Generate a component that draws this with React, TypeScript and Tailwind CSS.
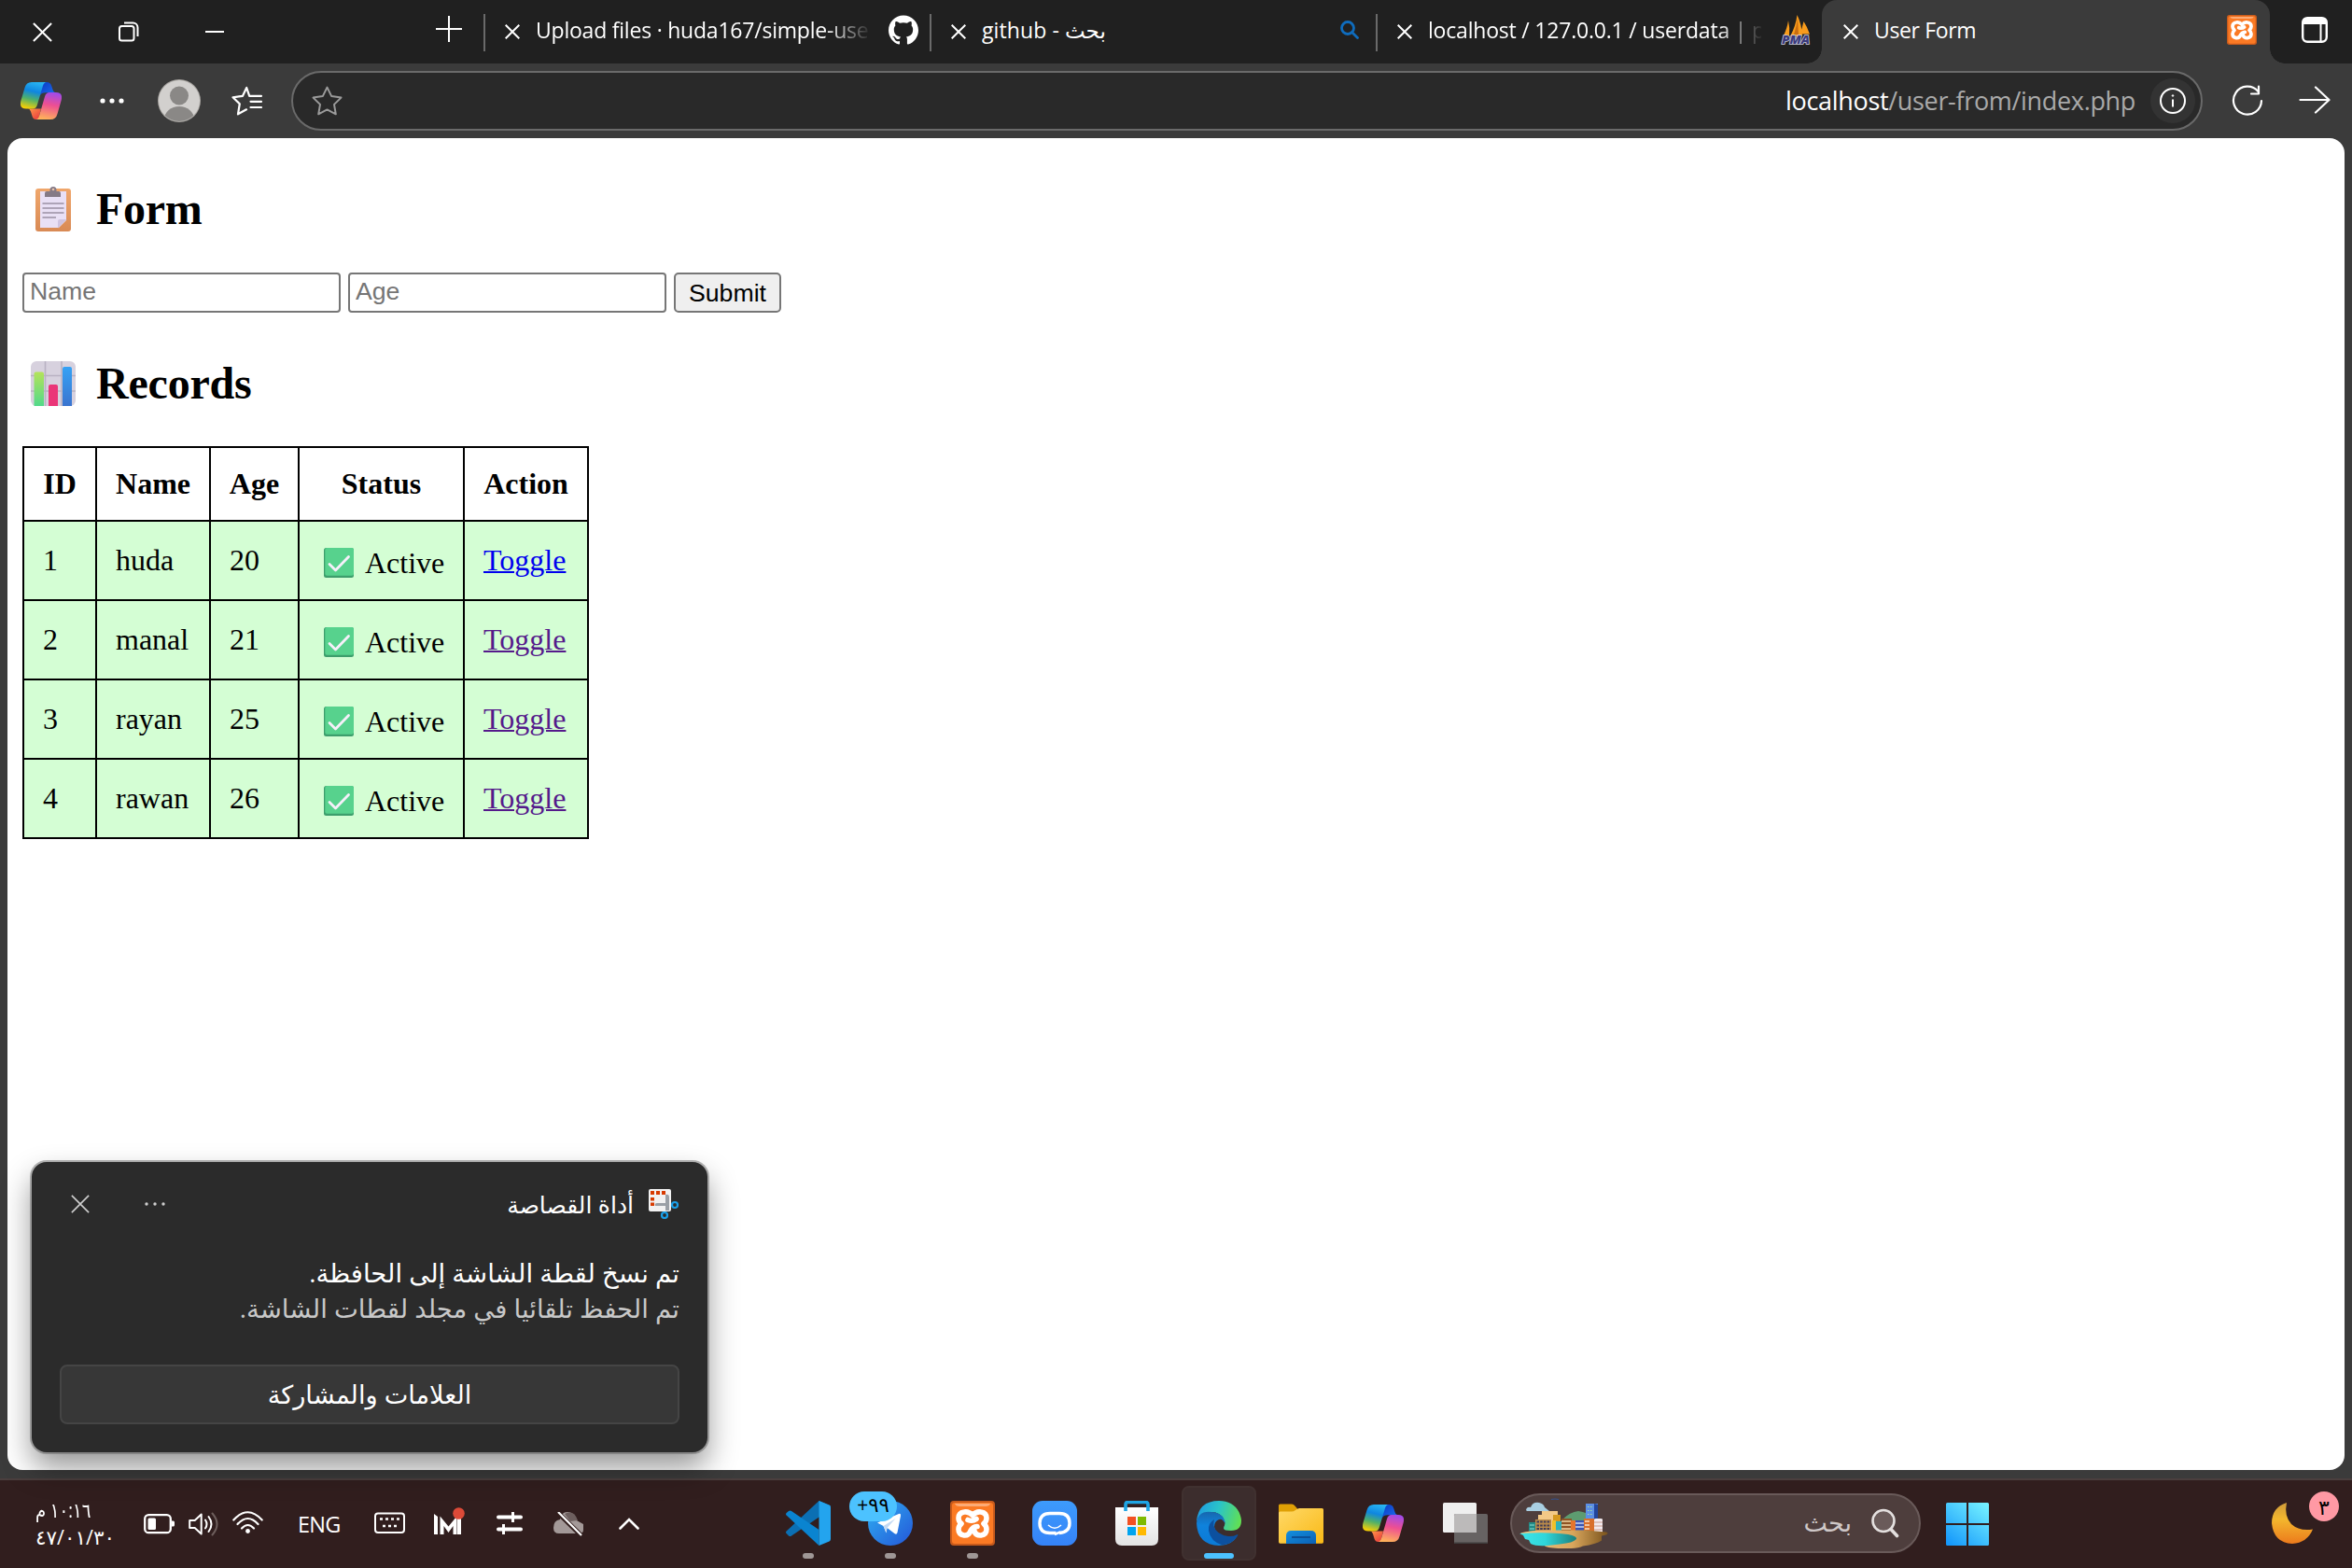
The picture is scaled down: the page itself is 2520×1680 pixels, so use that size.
import React from "react";
import { SiGithub } from "react-icons/si";

const UI = "font-['Open_Sans','DejaVu_Sans',sans-serif]";

function Cross({ size = 16, stroke = "#fff", w = 2 }: { size?: number; stroke?: string; w?: number }) {
  return (
    <svg width={size} height={size} viewBox="0 0 16 16" className="shrink-0" stroke={stroke} strokeWidth={(w * 16) / size}>
      <path d="M.7.7l14.6 14.6M15.3.7L.7 15.3" />
    </svg>
  );
}

function Xampp({ size }: { size: number }) {
  return (
    <svg width={size} height={size} viewBox="0 0 48 48" className="shrink-0" fill="none">
      <rect width="48" height="48" rx="4" fill="#c75a1c" />
      <rect x="2" y="2" width="44" height="44" rx="3" fill="#fb7a24" />
      <path d="M5 3h38q-1 3-5 3H10q-4 0-5-3z" fill="#fcab76" />
      <path
        d="M24 15.5Q20 11 15 12Q9 13 9 18.500Q9 22 12 24.500Q9 27 9 30.500Q9 36 15 37Q20 37.500 22 32M24 15.500Q28 11 33 12Q39 13 39 18.500Q39 22 36 24.500Q39 27 39 30.500Q39 36 33 37Q28 37.500 26 33L25.500 28.500M22 32Q24 28 29 27.500M19 20.500Q24 22.500 28 19.500"
        stroke="#fff"
        strokeWidth="5.600"
        strokeLinecap="round"
        strokeLinejoin="round"
      />
    </svg>
  );
}

function Copilot({ w, h, id }: { w: number; h: number; id: string }) {
  return (
    <svg width={w} height={h} viewBox="0 0 44 40" className="shrink-0">
      <defs>
        <linearGradient id={id + "a"} x1=".6" y1="0" x2=".35" y2="1">
          <stop offset="0" stopColor="#27b3f2" />
          <stop offset=".35" stopColor="#0f86e0" />
          <stop offset=".65" stopColor="#4fb06a" />
          <stop offset="1" stopColor="#f6cf05" />
        </linearGradient>
        <linearGradient id={id + "b"} x1=".6" y1="0" x2=".4" y2="1">
          <stop offset="0" stopColor="#a14be8" />
          <stop offset=".45" stopColor="#ee4f92" />
          <stop offset="1" stopColor="#ffb25a" />
        </linearGradient>
        <linearGradient id={id + "c"} x1="0" y1="0" x2="1" y2="1">
          <stop offset="0" stopColor="#0a3bc4" />
          <stop offset="1" stopColor="#1d6ff0" />
        </linearGradient>
        <linearGradient id={id + "d"} x1="0" y1="0" x2="1" y2="1">
          <stop offset="0" stopColor="#ff9a4a" />
          <stop offset="1" stopColor="#e8323c" />
        </linearGradient>
      </defs>
      <path d="M22 0h6q4 0 5.200 4l1.300 4q1 3.200 4 3.200H27q-5 0-6 3z" fill={`url(#${id}c)`} />
      <path d="M10 28.500h12l-3 11.500h-2q-3.500 0-4.500-3.500l-1.500-5q-1-3-3-3z" fill={`url(#${id}d)`} />
      <path d="M12 0h16q-3 0-4.200 4.500L18 24q-1.200 4.600-5 4.600H6q-8 0-5.500-9L4.500 6Q6 0 12 0z" fill={`url(#${id}a)`} />
      <path d="M32 40H16q3 0 4.200-4.500L26 15.600q1.200-4.600 5-4.600h7q8 0 5.500 9l-4 14Q38 40 32 40z" fill={`url(#${id}b)`} />
    </svg>
  );
}

function Pma() {
  return (
    <svg width="32" height="32" viewBox="0 0 32 32" className="shrink-0">
      <path d="M2.500 23Q7 14 8 6q2 8 1 17zM10 23Q16 12 17.500 0q5 10 5.500 23zM21 20.500q2-8 3.500-13.500 4 6 6.500 13.500z" fill="#f89c1c" />
      <path d="M14 21q3-9 4-17l1 17z" fill="#c96d10" />
      <text x="1" y="31" fontSize="11.500" fontWeight="800" fontStyle="italic" textLength="30" lengthAdjust="spacingAndGlyphs" fill="#3a3a7c" stroke="#c9c9da" strokeWidth="1.400" paintOrder="stroke" className={UI}>
        PMA
      </text>
    </svg>
  );
}

function Tab({ title, icon, fade = false, spacing, active = false }: { title: string; icon: React.ReactNode; fade?: boolean; spacing: string; active?: boolean }) {
  return (
    <div className={`flex h-[68px] shrink-0 items-center ${active ? "relative w-[480px] rounded-t-2xl bg-[#3b3b3b] pl-[23px]" : "w-[476px] pl-[21px]"}`}>
      {active && (
        <>
          <i className="absolute bottom-0 -left-4 size-4 bg-[radial-gradient(circle_at_0_0,#202020_15.500px,#3b3b3b_16px)]" />
          <i className="absolute -right-4 bottom-0 size-4 bg-[radial-gradient(circle_at_100%_0,#202020_15.500px,#3b3b3b_16px)]" />
        </>
      )}
      <Cross />
      <div
        className={`ml-[17px] w-[357px] shrink-0 overflow-hidden pb-[5px] text-[23px] leading-[34px] whitespace-nowrap text-white ${spacing} ${fade ? "[mask-image:linear-gradient(to_right,#000_310px,transparent_360px)]" : ""}`}
      >
        {title}
      </div>
      <div className={`flex w-8 shrink-0 justify-center pb-[4px] ${active ? "ml-[21px]" : "ml-[21px]"}`}>{icon}</div>
    </div>
  );
}

function Sep() {
  return <div className="mt-[15px] h-10 w-[2px] shrink-0 bg-[#6a6a6a]" />;
}

function TabBar() {
  return (
    <div className="flex h-[68px] bg-[#202020]">
      <div className="flex h-[68px] w-[518px] shrink-0 items-center pl-[35px]">
        <Cross size={21} />
        <svg width="22" height="22" viewBox="0 0 22 22" className="ml-[71px]" fill="none" stroke="#fff" strokeWidth="2">
          <rect x="1" y="5" width="15.500" height="15.500" rx="2.500" />
          <path d="M6 1.500h9.500a5 5 0 0 1 5 5V16" />
        </svg>
        <div className="ml-[71px] h-[2px] w-5 bg-white" />
        <svg width="28" height="28" viewBox="0 0 28 28" className="-mt-[6px] ml-[227px]" stroke="#fff" strokeWidth="2">
          <path d="M14 0v28M0 14h28" />
        </svg>
      </div>
      <Sep />
      <Tab title="Upload files · huda167/simple-use" fade spacing="tracking-[-0.22px]" icon={<SiGithub size={32} color="#fff" />} />
      <Sep />
      <Tab
        title="github - بحث"
        spacing="tracking-[0.1px]"
        icon={
          <svg width="20" height="20" viewBox="0 0 20 20" fill="none" stroke="#0f6cbd" strokeWidth="2.800">
            <circle cx="8" cy="8" r="6.500" />
            <path d="M12.500 12.500l6 6" strokeLinecap="round" />
          </svg>
        }
      />
      <Sep />
      <Tab title="localhost / 127.0.0.1 / userdata | p" fade spacing="tracking-[-0.2px]" icon={<Pma />} />
      <Tab title="User Form" active spacing="tracking-[-0.35px]" icon={<Xampp size={32} />} />
      <div className="flex w-[88px] items-start pt-[18px] pl-[34px]">
        <svg width="28" height="28" viewBox="0 0 28 28" fill="none">
          <rect x="1.200" y="1.200" width="25.600" height="25.600" rx="5" stroke="#fff" strokeWidth="2.400" />
          <path d="M1 8V5a4 4 0 0 1 4-4h18a4 4 0 0 1 4 4v3z" fill="#fff" />
          <path d="M20.500 8v19" stroke="#fff" strokeWidth="2" />
        </svg>
      </div>
    </div>
  );
}

const STAR = "M16.500 1.600l4.700 9.500 10.300 1.500-7.500 7.300 1.800 10.400-9.300-4.900-9.300 4.900 1.800-10.400L1.500 12.600l10.300-1.500z";

function Toolbar() {
  return (
    <div className="flex h-20 items-center bg-[#3b3b3b] pl-[22px]">
      <Copilot w={44} h={40} id="tb" />
      <svg width="26" height="6" viewBox="0 0 26 6" className="ml-[41px]" fill="#fff">
        <circle cx="3" cy="3" r="2.600" />
        <circle cx="13" cy="3" r="2.600" />
        <circle cx="23" cy="3" r="2.600" />
      </svg>
      <svg width="46" height="46" viewBox="0 0 46 46" className="ml-[36px]">
        <clipPath id="av">
          <circle cx="23" cy="23" r="22" />
        </clipPath>
        <circle cx="23" cy="23" r="23" fill="#a8a5a1" />
        <circle cx="23" cy="23" r="22" fill="#d2d0ce" />
        <g clipPath="url(#av)" fill="#8a8886">
          <circle cx="23" cy="17.500" r="10" />
          <ellipse cx="23" cy="43" rx="16" ry="14" />
        </g>
      </svg>
      <svg width="33" height="32" viewBox="0 0 33 32" className="ml-[33px]" fill="none" stroke="#fff" strokeWidth="2.200" strokeLinejoin="round" strokeLinecap="round">
        <path d="M19.500 10.800h-.3L16.200 2 12 10.800 1.500 12.300l7.300 7-1.800 11 9-5" />
        <path d="M20 10.800h12M20.500 16.800h11.500M20.500 23h11.500" />
      </svg>
      <div className="ml-[31px] flex h-16 w-[2048px] shrink-0 items-center rounded-full border-2 border-[#6a6a6a] bg-[#292929] pl-[20px]">
        <svg width="33" height="32" viewBox="0 0 33 32" fill="none" stroke="#9a9a9a" strokeWidth="2" strokeLinejoin="round">
          <path d={STAR} />
        </svg>
        <div className="ml-auto pb-[1px] text-[27px] leading-9 tracking-[-0.33px] whitespace-nowrap text-[#a9a9a9]">
          <span className="text-white">localhost</span>/user-from/index.php
        </div>
        <div className="mr-[6px] ml-[16px] flex size-12 items-center justify-center rounded-full bg-[#333]">
          <svg width="30" height="30" viewBox="0 0 30 30" fill="none" stroke="#fff" strokeWidth="2">
            <circle cx="15" cy="15" r="13" />
            <path d="M15 13.500v8" />
            <circle cx="15" cy="9.500" r=".8" fill="#fff" strokeWidth="1" />
          </svg>
        </div>
      </div>
      <svg width="34" height="34" viewBox="0 0 34 34" className="ml-[31px] shrink-0" fill="none" stroke="#fff" strokeWidth="2.200" strokeLinecap="round" strokeLinejoin="round">
        <path d="M28.500 7A15 15 0 1 0 32 17" />
        <path d="M29 1.500V9.500H21" />
      </svg>
      <svg width="34" height="30" viewBox="0 0 34 30" className="-mt-[2px] ml-[38px] shrink-0" fill="none" stroke="#fff" strokeWidth="2.200" strokeLinecap="round" strokeLinejoin="round">
        <path d="M1.500 15h31M18 1.500L32.500 15 18 28.500" />
      </svg>
    </div>
  );
}

function Clipboard() {
  return (
    <svg width="48" height="48" viewBox="0 0 48 48">
      <defs>
        <linearGradient id="cb" x1="0" y1="0" x2="0" y2="1">
          <stop offset="0" stopColor="#f0a76c" />
          <stop offset="1" stopColor="#d98a55" />
        </linearGradient>
      </defs>
      <rect x="5" y="2" width="38" height="46" rx="3" fill="url(#cb)" />
      <path d="M10 5h28v31l-8 8H10z" fill="#e9e0f5" />
      <path d="M38.500 35L29 44.500V37q0-2 2-2z" fill="#cfc3e0" />
      <path d="M15 11V7q0-2 2-2h3.500V3.500a3.500 3.500 0 0 1 7 0V5H30q2 0 2 2v4z" fill="#857a86" />
      <circle cx="24" cy="3" r="1.300" fill="#e6c3ac" />
      <path d="M12.500 18h23M12.500 23h23M12.500 28h23M12.500 33h14.500" stroke="#9a90a4" strokeWidth="1.500" />
    </svg>
  );
}

function BarChart() {
  return (
    <svg width="48" height="48" viewBox="0 0 48 48">
      <defs>
        <linearGradient id="bg1" x1="0" y1="0" x2="0" y2="1">
          <stop offset="0" stopColor="#b4e35a" />
          <stop offset="1" stopColor="#52d98a" />
        </linearGradient>
        <linearGradient id="bb1" x1="0" y1="0" x2="0" y2="1">
          <stop offset="0" stopColor="#35a2f5" />
          <stop offset="1" stopColor="#3a74cf" />
        </linearGradient>
      </defs>
      <rect width="48" height="48" rx="6" fill="#d7d1de" />
      <path d="M15.500 0v48M33 0v48M0 15.500h48M0 32h48" stroke="#b9b2c2" strokeWidth="1.600" />
      <path d="M3.500 48V13.500q0-2 2-2h6.500q2 0 2 2V48z" fill="url(#bg1)" />
      <path d="M19 48V27q0-2 2-2h6q2 0 2 2v21z" fill="#ea3578" />
      <path d="M34 48V8q0-2 2-2h6q2 0 2 2v40z" fill="url(#bb1)" />
    </svg>
  );
}

function CheckMark() {
  return (
    <svg width="32" height="32" viewBox="0 0 32 32" className="shrink-0">
      <rect width="32" height="32" rx="2.500" fill="#3d9e6c" />
      <rect x="1.300" y="0" width="30.700" height="29.800" rx="2" fill="#57d28d" />
      <path d="M6 17.500l6.500 6.500L26.500 9.500" fill="none" stroke="#f6f0fa" strokeWidth="2.800" strokeLinecap="round" strokeLinejoin="round" />
    </svg>
  );
}

const ROWS = [
  { id: 1, name: "huda", age: 20, link: "text-[#0000ee]" },
  { id: 2, name: "manal", age: 21, link: "text-[#551a8b]" },
  { id: 3, name: "rayan", age: 25, link: "text-[#551a8b]" },
  { id: 4, name: "rawan", age: 26, link: "text-[#551a8b]" },
];

function Page() {
  const td = "border-2 border-black px-5 pt-0 pb-[2px]";
  return (
    <div className="mx-2 h-[1427px] overflow-hidden rounded-2xl bg-white pl-4 font-['Liberation_Serif',serif] text-[32px] text-black">
      <h2 className="mt-[48px] flex h-[55px] items-center pl-[9px] text-[48px] leading-[55px] font-bold tracking-[-0.3px]">
        <Clipboard />
        <span className="ml-[22px]">Form</span>
      </h2>
      <form className="mt-[41px] flex h-[43px] gap-2 font-['Liberation_Sans',sans-serif] text-[26.670px]" onSubmit={(e) => e.preventDefault()}>
        <input placeholder="Name" className="w-[341px] rounded-[4px] border-2 border-[#767676] px-[6px] pb-[1px] placeholder:text-[#757575]" />
        <input placeholder="Age" className="w-[341px] rounded-[4px] border-2 border-[#767676] px-[6px] pb-[1px] placeholder:text-[#757575]" />
        <button className="w-[115px] rounded-[5px] border-2 border-[#767676] bg-[#efefef] pb-[3px]">Submit</button>
      </form>
      <h2 className="mt-[48px] flex h-[55px] items-center pl-[9px] text-[48px] leading-[55px] font-bold tracking-[-0.2px]">
        <BarChart />
        <span className="ml-[22px]">Records</span>
      </h2>
      <table className="mt-[40px] w-[607px] table-fixed border-collapse leading-9">
        <colgroup>
          <col className="w-[78px]" />
          <col className="w-[122px]" />
          <col className="w-[95px]" />
          <col className="w-[177px]" />
          <col className="w-[133px]" />
        </colgroup>
        <thead>
          <tr className="h-[79px]">
            {["ID", "Name", "Age", "Status", "Action"].map((h) => (
              <th key={h} className="border-2 border-black p-0 pb-[2px] text-center font-bold">
                {h}
              </th>
            ))}
          </tr>
        </thead>
        <tbody>
          {ROWS.map((r) => (
            <tr key={r.id} className="h-[85px] bg-[#d4fed4]">
              <td className={td}>{r.id}</td>
              <td className={td}>{r.name}</td>
              <td className={td}>{r.age}</td>
              <td className="border-2 border-black p-0">
                <div className="flex items-center pt-[4px] pl-[26px]">
                  <CheckMark />
                  <span className="ml-[12px]">Active</span>
                </div>
              </td>
              <td className={td}>
                <a href="#" className={`${r.link} underline decoration-2`}>
                  Toggle
                </a>
              </td>
            </tr>
          ))}
        </tbody>
      </table>
    </div>
  );
}

function Toast() {
  return (
    <div className="absolute top-[1245px] left-[34px] h-[311px] w-[724px] rounded-2xl bg-[#2b2b2b] px-[30px] text-white shadow-[0_0_0_2px_rgba(90,90,90,0.45),0_16px_32px_rgba(0,0,0,0.42)]">
      <div className="flex h-[90px] items-center pl-[12px]">
        <Cross size={20} stroke="#cfcfcf" w={1.6} />
        <svg width="22" height="4" viewBox="0 0 22 4" className="ml-[59px]" fill="#cfcfcf">
          <circle cx="2" cy="2" r="1.700" />
          <circle cx="11" cy="2" r="1.700" />
          <circle cx="20" cy="2" r="1.700" />
        </svg>
        <span dir="rtl" className="ml-auto text-[25px] leading-8 whitespace-nowrap">
          أداة القصاصة
        </span>
        <svg width="33" height="32" viewBox="0 0 33 32" className="ml-[16px]" fill="none">
          <rect width="24" height="24" rx="2" fill="#f2f2f2" />
          <path d="M2 4h4M8 4h4M14 4h4M4 9v3.500M4 14.500V18" stroke="#d83b01" strokeWidth="4" />
          <path d="M18 6q4-1 4 3v14h-4v-5H7q-1-3 2-3h9z" fill="#9aa0a6" />
          <circle cx="28" cy="17" r="3" stroke="#1a9fe8" strokeWidth="2.200" />
          <circle cx="17" cy="28" r="3" stroke="#1a9fe8" strokeWidth="2.200" />
        </svg>
      </div>
      <div dir="rtl" className="mt-[10px] text-[27.500px] leading-[38px] whitespace-nowrap">
        <div>تم نسخ لقطة الشاشة إلى الحافظة.</div>
        <div className="text-[#c8c8c8]">تم الحفظ تلقائيا في مجلد لقطات الشاشة.</div>
      </div>
      <button dir="rtl" className="mt-[41px] flex h-16 w-full items-center justify-center rounded-lg border-2 border-[#454545] bg-[#373737] text-[27.200px]">
        العلامات والمشاركة
      </button>
    </div>
  );
}

function Tray() {
  return (
    <div className="flex h-[94px] w-[842px] shrink-0 items-center pl-[38px] text-white">
      <div className="w-[84px] pb-[2px] leading-[30px] whitespace-nowrap">
        <div dir="rtl" className="origin-left scale-x-[0.82] text-left text-[22px]">
          ١٠:١٦ م
        </div>
        <div dir="ltr" className="text-[21.500px]">
          ٤٧/٠١/٣٠
        </div>
      </div>
      <svg width="34" height="22" viewBox="0 0 34 22" className="ml-[32px]" fill="none">
        <rect x="1.200" y="1.200" width="27.600" height="19" rx="4" stroke="#fff" strokeWidth="2.300" />
        <rect x="4.500" y="4.500" width="8.500" height="12.500" rx="1.500" fill="#fff" />
        <path d="M30 7.500h1.500q1.500 0 1.500 1.500v3q0 1.500-1.500 1.500H30z" fill="#fff" />
      </svg>
      <svg width="33" height="28" viewBox="0 0 33 28" className="ml-[14px]" fill="none" stroke="#fff" strokeWidth="2" strokeLinejoin="round" strokeLinecap="round">
        <path d="M1.200 10v8h5.500l7 6.500V3.500L6.700 10z" />
        <path d="M18 9.500q3 4.500 0 9M21.500 6q6 8 0 16" />
        <path d="M25.500 2.500q10 11.500 0 23" stroke="#6d5e5c" />
      </svg>
      <svg width="33" height="25" viewBox="0 0 33 25" className="-mt-[3px] ml-[14px]" fill="none" stroke="#fff" strokeWidth="2.200" strokeLinecap="round">
        <path d="M1.300 9.500q15.200-16.500 30.400 0M5.500 14q11-12 22 0M10 18.500q6.500-7 13 0" />
        <circle cx="16.500" cy="21.500" r="2.400" fill="#fff" stroke="none" />
      </svg>
      <div className="ml-[37px] w-[82px] text-[23.500px] leading-8 tracking-[-0.8px]">ENG</div>
      <svg width="33" height="24" viewBox="0 0 33 24" className="-mt-[3px]" fill="none" stroke="#fff" strokeWidth="2">
        <rect x="1" y="1.500" width="31" height="20.500" rx="3" />
        <path d="M6 7.500h3M12 7.500h3M18 7.500h3M24 7.500h3M9 15h3M15 15h3M21 15h3" strokeWidth="2.400" />
      </svg>
      <svg width="33" height="30" viewBox="0 0 33 30" className="-mt-[7px] ml-[31px]">
        <path d="M0 29V7l4 3v19zM6.500 29V9.500l9 11 9-11V29H20.500V20l-5 7-5-7v9zM25 29V12h4v17z" fill="#fff" />
        <circle cx="26.500" cy="6.500" r="6.300" fill="#dc4a38" />
      </svg>
      <svg width="28" height="24" viewBox="0 0 28 24" className="-mt-[2px] ml-[34px]" fill="#fff">
        <path d="M2 3.500h14V0h3v3.500h7q2 0 2 2t-2 2h-7V11h-3V7.500H2q-2 0-2-2t2-2zM2 16.500h4V13h3v3.500h17q2 0 2 2t-2 2H9V24H6v-3.500H2q-2 0-2-2t2-2z" />
      </svg>
      <svg width="33" height="26" viewBox="0 0 33 26" className="ml-[33px]">
        <path d="M7 8a8 8 0 0 1 16 0l9 5v6q0 4-4 4H6q-6 0-6-6 0-8 7-9z" fill="#a39998" />
        <path d="M12 2q10-5 14 7l-8 1z" fill="#6d5f5e" />
        <path d="M4 0l26 25.500" stroke="#321e1d" strokeWidth="5" />
        <path d="M5 0l25 25" stroke="#fff" strokeWidth="2.200" />
      </svg>
      <svg width="22" height="13" viewBox="0 0 22 13" className="-mt-[2px] ml-[37px]" fill="none" stroke="#fff" strokeWidth="2.600" strokeLinecap="round">
        <path d="M1.500 11.500L11 2l9.500 9.500" />
      </svg>
    </div>
  );
}

function App48({ children, running }: { children: React.ReactNode; running?: boolean }) {
  return (
    <div className="relative flex h-[92px] w-12 shrink-0 items-center justify-center">
      {children}
      {running && <i className="absolute bottom-[8px] left-[18px] h-[6px] w-3 rounded-full bg-[#9f9796]" />}
    </div>
  );
}

function VsCode() {
  return (
    <svg width="48" height="48" viewBox="0 0 48 48">
      <path d="M35.500 0L48 5.500 35.500 17.500 6 37.500q-1.500 1-3 0L.6 35q-1.200-1.300 0-2.500z" fill="#0b6fb3" />
      <path d="M35.500 48L.6 15.500q-1.200-1.200 0-2.500L3 11q1.500-1 3 0l29.500 20z" fill="#0a84d0" />
      <path d="M35.500 0L46.500 4.500q1.500.7 1.500 2.500v34q0 1.800-1.500 2.500L35.500 48z" fill="#23a4ee" />
    </svg>
  );
}

function Telegram() {
  return (
    <svg width="48" height="48" viewBox="0 0 48 48">
      <defs>
        <linearGradient id="tg" x1="0" y1="0" x2="1" y2="1">
          <stop offset="0" stopColor="#2fb1f2" />
          <stop offset="1" stopColor="#2456d8" />
        </linearGradient>
      </defs>
      <circle cx="24" cy="24" r="24" fill="url(#tg)" />
      <path d="M10 23.500L33 14q2.300-.8 2 2L31.500 34q-.7 2.500-2.800 1.200L20.500 29l-1 5.500-3-7.500z" fill="#fff" />
      <path d="M16.500 27l13-8-9 10-1 5z" fill="#c3d9f3" />
    </svg>
  );
}

function Smile() {
  return (
    <svg width="48" height="48" viewBox="0 0 48 48" fill="none">
      <defs>
        <linearGradient id="sm" x1="0" y1="0" x2="0" y2="1">
          <stop offset="0" stopColor="#3d9bfb" />
          <stop offset="1" stopColor="#3583f8" />
        </linearGradient>
      </defs>
      <rect width="48" height="48" rx="11" fill="url(#sm)" />
      <path d="M29 34.500q11-1 11-10.500 0-10.500-11-10.500H19q-11 0-11 10.500t11 10.500h6.500" stroke="#fff" strokeWidth="3.400" />
      <path d="M24 36l6-2.500" stroke="#fff" strokeWidth="2.500" />
      <path d="M17 26q7 6.500 14 0" stroke="#fff" strokeWidth="1.500" />
    </svg>
  );
}

function Store() {
  return (
    <svg width="48" height="48" viewBox="0 0 48 48">
      <defs>
        <linearGradient id="st" x1="0" y1="0" x2="0" y2="1">
          <stop offset="0" stopColor="#fff" />
          <stop offset="1" stopColor="#e3e3e3" />
        </linearGradient>
      </defs>
      <path d="M1 7h46v34q0 7-7 7H8q-7 0-7-7z" fill="url(#st)" />
      <path d="M12 11V4q0-2.500 2.500-2.500h19Q36 1.500 36 4v7" fill="none" stroke="#1fa5e4" strokeWidth="3.600" />
      <path d="M14 17h9v9h-9z" fill="#f25022" />
      <path d="M25 17h9v9h-9z" fill="#7fba00" />
      <path d="M14 28h9v9h-9z" fill="#00a4ef" />
      <path d="M25 28h9v9h-9z" fill="#ffb900" />
    </svg>
  );
}

function Edge() {
  return (
    <svg width="48" height="48" viewBox="0 0 48 48">
      <defs>
        <linearGradient id="ed1" x1="0" y1=".4" x2="1" y2=".6">
          <stop offset="0" stopColor="#1f9de0" />
          <stop offset=".45" stopColor="#2ac4c8" />
          <stop offset="1" stopColor="#62e052" />
        </linearGradient>
        <linearGradient id="ed2" x1="0" y1="0" x2="0" y2="1">
          <stop offset="0" stopColor="#1767ae" />
          <stop offset=".4" stopColor="#0f82dc" />
          <stop offset="1" stopColor="#0b7ad6" />
        </linearGradient>
      </defs>
      <path d="M0 22Q2 0 24 0q15 0 21.500 12Q48 18 48 21q0 11-11 11-8 0-8-2.500 0-1.500 1-3 1-2 0-5Q27 12 15 12 5 12 0 22z" fill="url(#ed1)" />
      <path d="M0 24q1-12 13-12.200 14 0 17 9 .6 2 .3 3.500Q28 18.500 24 20q-5 2-5 8 2 12 14 13 6 0 11-4-6 11-20 11Q1 47 0 24z" fill="url(#ed2)" />
      <path d="M19 20q-7 4-6 12 2 12 15 15.500Q39 46 44 37.500q1-2-.6-1.300Q39 38.500 34 38q-13-2-15.500-11-.5-3 .5-7z" fill="#0c509f" />
    </svg>
  );
}

function Folder() {
  return (
    <svg width="48" height="43" viewBox="0 0 48 43">
      <defs>
        <linearGradient id="fo" x1="0" y1="0" x2="1" y2="1">
          <stop offset="0" stopColor="#ffd968" />
          <stop offset="1" stopColor="#f9b916" />
        </linearGradient>
        <linearGradient id="fb" x1="0" y1="0" x2="1" y2="1">
          <stop offset="0" stopColor="#1490df" />
          <stop offset="1" stopColor="#0b60b5" />
        </linearGradient>
      </defs>
      <path d="M0 2q0-1.500 1.500-1.500H14q2 0 3.500 2L20.500 6V12H0z" fill="#dfa005" />
      <path d="M0 10q0-1.500 1.500-1.500H14q2 0 4-1.500t4-2h24.500Q48 5 48 6.500V41q0 1.800-1.500 1.800h-45Q0 42.800 0 41z" fill="url(#fo)" />
      <path d="M8 43V34.500q0-5.500 5.500-5.500h21q5.500 0 5.500 5.500V43z" fill="url(#fb)" />
      <path d="M14 36h20" stroke="#0b4f97" strokeWidth="2" />
    </svg>
  );
}

function TaskView() {
  return (
    <svg width="48" height="45" viewBox="0 0 48 45">
      <rect width="36" height="32" rx="1.500" fill="#efefef" />
      <rect x="12" y="12" width="36" height="32" rx="1.500" fill="#676363" />
      <path d="M12 13.500q0-1.500 1.500-1.500H36v20H12z" fill="#bcbaba" />
      <path d="M12 42.500h36q0 1.500-1.500 1.500h-33q-1.500 0-1.500-1.500z" fill="#3f3c3c" />
    </svg>
  );
}

function City() {
  return (
    <svg width="96" height="54" viewBox="0 0 96 54">
      <defs>
        <linearGradient id="sand" x1="0" y1="0" x2="1" y2="0">
          <stop offset="0" stopColor="#f2c886" />
          <stop offset=".6" stopColor="#d9a65c" />
          <stop offset="1" stopColor="#7a531c" />
        </linearGradient>
        <linearGradient id="sea" x1="0" y1="0" x2="1" y2="0">
          <stop offset="0" stopColor="#3fe6ea" />
          <stop offset=".45" stopColor="#2fd6da" />
          <stop offset="1" stopColor="#1b7f7c" />
        </linearGradient>
      </defs>
      <path d="M34 1.500q4-1 8 0" stroke="#33508c" strokeWidth="1.200" fill="none" />
      <path d="M7 13q1-4 5-3 2-6 9-5 5 1 6 5l5 4H8z" fill="#a9cfe2" />
      <path d="M46 23q8-8 17-9 10 1 18 8l8 1v6H46z" fill="#5d9b70" />
      <path d="M24 14h17v4h3v17H20V18h4z" fill="#f3c987" />
      <path d="M36 18h8v18h-8z" fill="#d6991f" />
      <path d="M17 23h17v13H17z" fill="#b98a4a" />
      <path d="M18.500 25.500h15M18.500 29.500h15M18.500 33h15" stroke="#3e3a56" strokeWidth="2" strokeDasharray="2.500 1.200" />
      <path d="M10 26h7v10h-7z" fill="#218a86" />
      <path d="M11 29h5M11 33h5" stroke="#8fe0d4" strokeWidth="1" />
      <path d="M38 25h9v11h-9z" fill="#2fb2ba" />
      <path d="M35 24h4v12h-4z" fill="#f0c02a" />
      <path d="M45 22h11v13H45z" fill="#8e5424" />
      <path d="M45 25h11M45 29h11M45 33h11" stroke="#f2d6a4" strokeWidth="1.600" />
      <path d="M55 24h6v11h-6z" fill="#e5752c" />
      <path d="M60 24h10v11H60z" fill="#3b55b4" />
      <path d="M60 27h10M60 31h10" stroke="#c6d5f2" strokeWidth="1.600" />
      <path d="M71 6h13v17H71z" fill="#5c8fe6" />
      <path d="M80 6l4 1v16h-4z" fill="#22459c" />
      <path d="M73 9.500h6M73 13.500h6M73 17.500h6" stroke="#a8e09a" strokeWidth="1" strokeDasharray="1.500 1.500" />
      <path d="M69 22h11v14H69z" fill="#d86f2c" />
      <path d="M70 25h5M70 29h5M70 33h5" stroke="#fbe4c6" strokeWidth="1.600" />
      <path d="M80 23q0-1 2-1h5q2 0 2 1v15h-9z" fill="#f1e9ee" />
      <path d="M80 26h9M80 30h9M80 34h9" stroke="#c99a8c" strokeWidth="1.200" />
      <path d="M1 37.500q10-3 30-3h40l22 2q3 1 0 3l-5 1v5q-6 4-20 6-6 3-20 2.500-14 0-20-2L20 45z" fill="url(#sand)" />
      <path d="M0 38q30-2 52 1 10 2 9 5-3 4-18 5.500L30 51q-12 1-18-2l-2-4-4-1-2-4z" fill="url(#sea)" />
    </svg>
  );
}

function Taskbar() {
  return (
    <div className="flex h-24 border-t-2 border-[#4b3f3e] bg-[#311e1e]">
      <Tray />
      <App48 running>
        <VsCode />
      </App48>
      <div className="w-10" />
      <App48 running>
        <Telegram />
        <div className="absolute top-[12px] -left-5 flex h-8 w-[51px] items-center justify-center rounded-full bg-[#4cc2ff] pb-[2px] text-[21px] tracking-[-0.5px] text-black" dir="ltr">
          +٩٩
        </div>
      </App48>
      <div className="w-10" />
      <App48 running>
        <Xampp size={48} />
      </App48>
      <div className="w-10" />
      <App48>
        <Smile />
      </App48>
      <div className="w-10" />
      <App48>
        <Store />
      </App48>
      <div className="relative mx-6 mt-[6px] flex h-20 w-20 items-center justify-center rounded-lg border-2 border-[#403130] bg-[#3c2d2d]">
        <Edge />
        <i className="absolute bottom-0 left-[22px] h-[6px] w-8 rounded-full bg-[#4cc2ff]" />
      </div>
      <App48>
        <Folder />
      </App48>
      <div className="w-10" />
      <App48>
        <Copilot w={44} h={40} id="tk" />
      </App48>
      <div className="w-10" />
      <App48>
        <TaskView />
      </App48>
      <div className="mt-[14px] ml-6 flex h-16 w-[440px] shrink-0 items-center rounded-full border-2 border-[#695a59] bg-[#4e3e3d] pl-2">
        <City />
        <span dir="rtl" className="ml-auto pb-[2px] text-[27px] leading-9 text-[#cfc8c8]">
          بحث
        </span>
        <svg width="30" height="32" viewBox="0 0 30 32" className="mr-[21px] ml-[21px]" fill="none" stroke="#e4e0df">
          <circle cx="13" cy="13.500" r="11.500" strokeWidth="2.600" fill="#6a5b5a" />
          <path d="M21 22.500l6.500 7" strokeWidth="3.600" strokeLinecap="round" />
        </svg>
      </div>
      <svg width="46" height="46" viewBox="0 0 46 46" className="mt-[24px] ml-[27px] shrink-0">
        <defs>
          <linearGradient id="wn" gradientUnits="userSpaceOnUse" x1="4" y1="46" x2="40" y2="0">
            <stop offset="0" stopColor="#1497fb" />
            <stop offset="1" stopColor="#73f0ff" />
          </linearGradient>
        </defs>
        <path d="M1.500 0H22v22H0V1.500Q0 0 1.500 0zM24 0h20.500Q46 0 46 1.500V22H24zM0 24h22v22H1.500Q0 46 0 44.500zM24 24h22v20.500q0 1.500-1.500 1.500H24z" fill="url(#wn)" />
      </svg>
      <div className="relative mt-[24px] ml-[303px] h-12 w-11 shrink-0">
        <svg width="44" height="44" viewBox="0 0 44 44">
          <defs>
            <linearGradient id="mn" x1="0" y1="0" x2="0" y2="1">
              <stop offset="0" stopColor="#cf9b3a" />
              <stop offset=".4" stopColor="#f3b72e" />
              <stop offset="1" stopColor="#ec7a1c" />
            </linearGradient>
          </defs>
          <path d="M16 0Q0 5 0 22q2 21 22 22 16-1 22-15.500Q30 31 21 23 13 14 16 0z" fill="url(#mn)" />
        </svg>
        <div className="absolute -top-3 left-10 flex size-8 items-center justify-center rounded-full bg-[#ff99a4] text-[22px] text-black">٣</div>
      </div>
    </div>
  );
}

export default function App() {
  return (
    <div className={`relative flex h-[1680px] w-[2520px] flex-col overflow-hidden bg-[#3b3b3b] ${UI}`}>
      <TabBar />
      <Toolbar />
      <Page />
      <div className="h-[9px]" />
      <Taskbar />
      <Toast />
    </div>
  );
}
